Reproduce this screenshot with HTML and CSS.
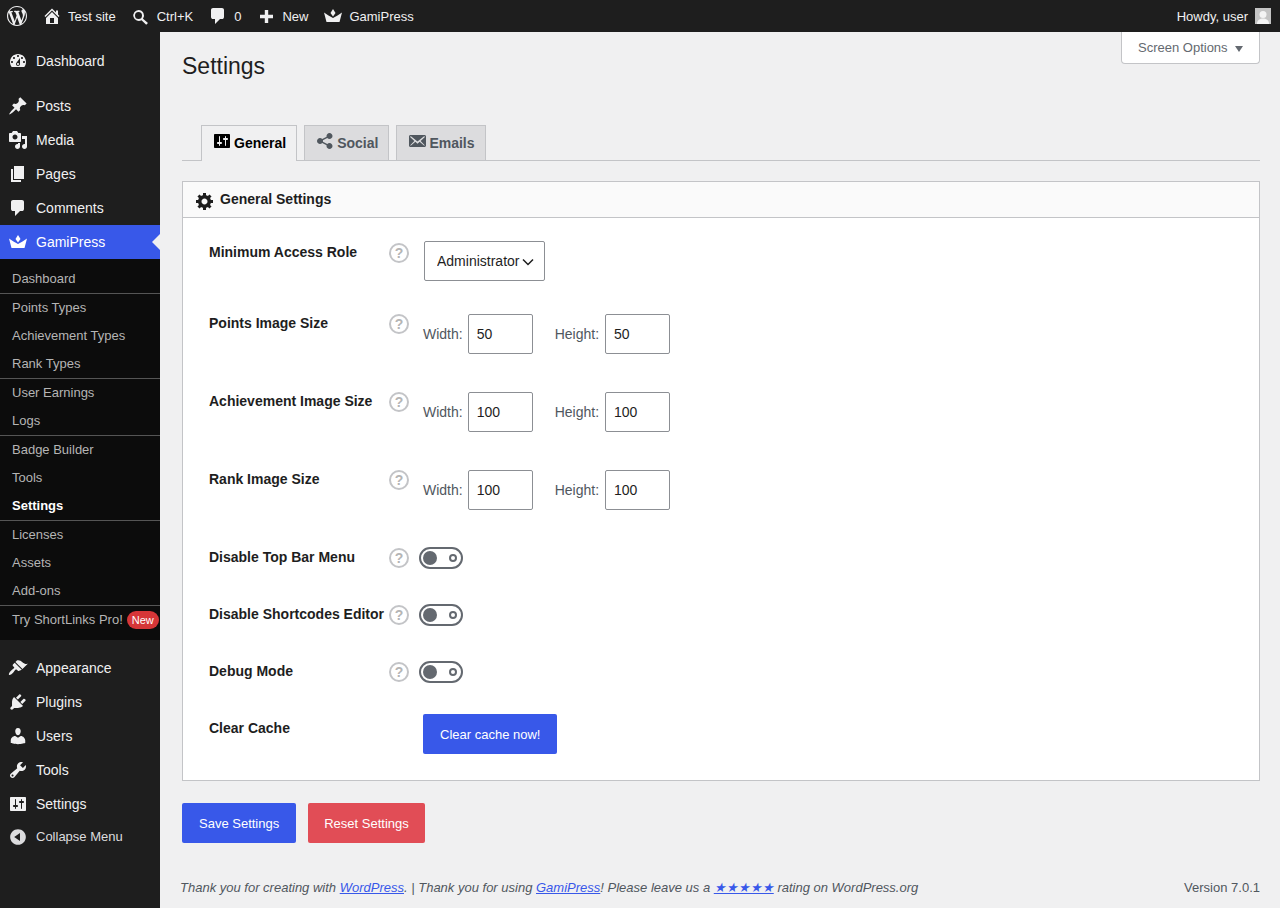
FILE: index.html
```html
<!DOCTYPE html>
<html>

<head>
    <title>Settings</title>
    <link rel="stylesheet" href="styles.css">
</head>

<body>
    <!-- Icon sprites -->
    <svg class="sprites" xmlns="http://www.w3.org/2000/svg">
        <symbol id="i-wp" viewBox="0 0 20 20"><path d="M20 10c0-5.51-4.49-10-10-10C4.48 0 0 4.49 0 10c0 5.52 4.48 10 10 10 5.51 0 10-4.48 10-10zM7.78 15.37L4.37 6.22c.55-.02 1.17-.08 1.17-.08.5-.06.44-1.13-.06-1.11 0 0-1.45.11-2.37.11-.18 0-.37 0-.58-.01C4.12 2.69 6.87 1.11 10 1.11c2.33 0 4.45.87 6.05 2.34-.68-.11-1.65.39-1.65 1.58 0 .74.45 1.36.9 2.1.35.61.55 1.36.55 2.46 0 1.49-1.4 5-1.4 5l-3.03-8.37c.54-.02.82-.17.82-.17.5-.05.44-1.25-.06-1.22 0 0-1.44.12-2.38.12-.87 0-2.33-.12-2.33-.12-.5-.03-.56 1.2-.06 1.22l.92.08 1.26 3.41zM17.41 10c.24-.64.74-1.87.43-4.25.7 1.29 1.05 2.71 1.05 4.25 0 3.29-1.73 6.24-4.4 7.78.97-2.59 1.94-5.2 2.92-7.78zM6.1 18.09C3.12 16.65 1.11 13.53 1.11 10c0-1.3.23-2.48.72-3.59C3.25 10.3 4.67 14.2 6.1 18.09zm4.03-6.63l2.58 6.98c-.86.29-1.76.45-2.71.45-.79 0-1.57-.11-2.29-.33.81-2.38 1.62-4.74 2.42-7.1z"/></symbol>
        <symbol id="i-home" viewBox="0 0 20 20"><path d="M16 8.5l1.53 1.53-1.06 1.06L10 4.62l-6.47 6.47-1.06-1.06L10 2.5l4 4v-2h2v4zm-6-2.46l6 5.99V18H4v-5.97zM12 17v-5H8v5h4z"/></symbol>
        <symbol id="i-search" viewBox="0 0 20 20"><path d="M7.500 4a5.500 5.500 0 0 1 4.500 8.700l5 4.300-1.800 1.800-4.700-4.500A5.500 5.500 0 1 1 7.500 4zm0 2a3.500 3.500 0 1 0 0 7 3.500 3.500 0 0 0 0-7z"/></symbol>
        <symbol id="i-comment" viewBox="0 0 20 20"><path d="M5 2h9q.82 0 1.41.59T16 4v7q0 .82-.59 1.41T14 13h-2l-5 5v-5H5q-.82 0-1.41-.59T3 11V4q0-.82.59-1.41T5 2z"/></symbol>
        <symbol id="i-plus" viewBox="0 0 20 20"><path d="M8.800 4h3.400v4.800H17v3.400h-4.800V17H8.800v-4.800H4V8.800h4.800z"/></symbol>
        <symbol id="i-crown" viewBox="0 0 20 20"><path d="M10 3l2.500 4L10 10.500 7.500 7zM1 6.500l4.500 3L10 12l4.500-2.500 4.500-3L16.500 16h-13z"/></symbol>
        <symbol id="i-dashboard" viewBox="0 0 20 20"><path d="M3.760 16h12.480c1.100-1.370 1.760-3.110 1.760-5 0-4.420-3.580-8-8-8s-8 3.580-8 8c0 1.890.66 3.630 1.760 5zM10 4c.55 0 1 .45 1 1s-.45 1-1 1-1-.45-1-1 .45-1 1-1zM6 6c.55 0 1 .45 1 1s-.45 1-1 1-1-.45-1-1 .45-1 1-1zm8 0c.55 0 1 .45 1 1s-.45 1-1 1-1-.45-1-1 .45-1 1-1zm-5.370 5.550L12 7v6c0 1.100-.9 2-2 2s-2-.9-2-2c0-.57.24-1.080.63-1.450zM4 10c.55 0 1 .45 1 1s-.45 1-1 1-1-.45-1-1 .45-1 1-1zm12 0c.55 0 1 .45 1 1s-.45 1-1 1-1-.45-1-1 .45-1 1-1zm-5 3c0-.55-.45-1-1-1s-1 .45-1 1 .45 1 1 1 1-.45 1-1z"/></symbol>
        <symbol id="i-pin" viewBox="0 0 20 20"><path d="M10.440 3.020l1.820-1.820 6.360 6.350-1.830 1.820c-1.050-.68-2.480-.57-3.410.36l-.75.75c-.92.93-1.040 2.350-.35 3.410l-1.830 1.820-2.410-2.410-2.800 2.790c-.42.42-3.380 2.710-3.800 2.290s1.860-3.390 2.280-3.810l2.790-2.790L4.100 9.360l1.830-1.820c1.050.69 2.480.57 3.400-.36l.75-.75c.93-.92 1.050-2.350.36-3.410z"/></symbol>
        <symbol id="i-media" viewBox="0 0 20 20"><path d="M13 11V4c0-.55-.45-1-1-1h-1.670L9 1H5L3.670 3H2c-.55 0-1 .45-1 1v7c0 .55.45 1 1 1h10c.55 0 1-.45 1-1zM7 4.500c1.380 0 2.500 1.120 2.500 2.500S8.380 9.500 7 9.500 4.500 8.380 4.500 7 5.620 4.500 7 4.500zM14 6h5v10.500c0 1.380-1.120 2.500-2.500 2.500S14 17.880 14 16.500s1.120-2.500 2.500-2.500c.17 0 .34.02.5.05V9h-3V6zm-4 8.050V13h2v3.500c0 1.380-1.120 2.500-2.500 2.500S7 17.880 7 16.500 8.120 14 9.500 14c.17 0 .34.02.5.05z"/></symbol>
        <symbol id="i-pages" viewBox="0 0 20 20"><path d="M6 15V2h10v13H6zm-1 1h8v2H3V5h2v11z"/></symbol>
        <symbol id="i-brush" viewBox="0 0 20 20"><path d="M14.480 11.060L7.410 3.990l1.500-1.500c.5-.56 2.300-.47 3.510.32 1.210.8 1.430 1.280 2.910 2.100 1.180.64 2.450 1.260 4.450.85zm-.71.71L6.700 4.700 4.930 6.470c-.39.39-.39 1.020 0 1.410l1.060 1.060c.39.39.39 1.030 0 1.420-.6.6-1.430 1.150-2.210 1.730-.35.26-.7.53-1.010.84-1.340 1.340-2.400 3.200-1.770 3.830.63.63 2.490-.43 3.830-1.770.31-.31.580-.66.840-1.010.58-.78 1.130-1.610 1.730-2.210.39-.39 1.030-.39 1.420 0l1.060 1.060c.39.39 1.020.39 1.410 0z"/></symbol>
        <symbol id="i-plugin" viewBox="0 0 20 20"><path d="M13.110 4.360L9.870 7.600 8 5.730l3.240-3.240c.35-.34 1.050-.2 1.560.32.52.51.66 1.210.31 1.550zm-8 1.770l.91-1.120 9.010 9.010-1.190.84c-.71.71-2.630 1.160-3.820 1.160H6.140L4.900 17.260c-.59.59-1.540.59-2.120 0-.59-.58-.59-1.530 0-2.120l1.240-1.240v-3.880c0-1.130.4-3.190 1.090-3.890zm7.260 3.970l3.240-3.240c.34-.35 1.040-.21 1.550.31.52.51.66 1.210.31 1.550l-3.240 3.250z"/></symbol>
        <symbol id="i-users" viewBox="0 0 20 20"><path d="M10 9.250c-2.270 0-2.730-3.440-2.730-3.440C7 4.020 7.820 2 9.970 2c2.160 0 2.980 2.020 2.710 3.810 0 0-.41 3.440-2.680 3.440zm0 2.570L12.720 10c2.390 0 4.520 2.330 4.520 4.530v2.490s-3.650 1.130-7.240 1.130c-3.650 0-7.240-1.130-7.240-1.130v-2.490c0-2.250 1.940-4.480 4.470-4.480z"/></symbol>
        <symbol id="i-tools" viewBox="0 0 20 20"><path d="M16.680 9.770c-1.340 1.340-3.300 1.670-4.950.99l-5.410 6.520c-.99.99-2.590.99-3.580 0s-.99-2.590 0-3.570l6.520-5.420c-.68-1.650-.35-3.610.99-4.950 1.280-1.280 3.120-1.620 4.720-1.060l-2.890 2.890 2.820 2.820 2.860-2.870c.53 1.580.18 3.390-1.080 4.650zM3.810 16.210c.4.39 1.040.39 1.430 0 .4-.4.4-1.040 0-1.430-.39-.4-1.030-.4-1.430 0-.39.39-.39 1.030 0 1.430z"/></symbol>
        <symbol id="i-settings" viewBox="0 0 20 20"><path d="M18 16V4c0-.55-.45-1-1-1H3c-.55 0-1 .45-1 1v12c0 .55.45 1 1 1h14c.55 0 1-.45 1-1zM8 11h1c.55 0 1 .45 1 1s-.45 1-1 1H8v1.500c0 .28-.22.5-.5.5s-.5-.22-.5-.5V13H6c-.55 0-1-.45-1-1s.45-1 1-1h1V5.500c0-.28.22-.5.5-.5s.5.22.5.5V11zm5-2h-1c-.55 0-1-.45-1-1s.45-1 1-1h1V5.500c0-.28.22-.5.5-.5s.5.22.5.5V7h1c.55 0 1 .45 1 1s-.45 1-1 1h-1v5.500c0 .28-.22.5-.5.5s-.5-.22-.5-.5V9z"/></symbol>
        <symbol id="i-collapse" viewBox="0 0 20 20"><path d="M10 2.160c4.330 0 7.840 3.510 7.840 7.840s-3.510 7.840-7.840 7.840S2.160 14.330 2.160 10 5.710 2.160 10 2.160zm2 11.720V6.120L6.180 9.970z"/></symbol>
        <symbol id="i-gear" viewBox="0 0 20 20"><path d="M18 12h-2.180c-.17.7-.44 1.350-.81 1.930l1.540 1.540-2.100 2.100-1.540-1.540c-.58.36-1.230.63-1.910.79V19H8v-2.180c-.68-.16-1.330-.43-1.910-.79l-1.540 1.540-2.120-2.120 1.540-1.540c-.36-.58-.63-1.230-.79-1.910H1V9.030h2.170c.16-.7.44-1.350.8-1.940L2.430 5.550l2.100-2.100 1.540 1.540c.58-.37 1.240-.64 1.930-.81V2h3v2.180c.68.16 1.330.43 1.910.79l1.540-1.540 2.120 2.120-1.540 1.540c.36.59.64 1.240.8 1.940H18V12zm-8.500 1.500c1.660 0 3-1.340 3-3s-1.340-3-3-3-3 1.340-3 3 1.340 3 3 3z"/></symbol>
        <symbol id="i-share" viewBox="0 0 20 20"><path d="M14.500 12q1.240 0 2.120.88T17.500 15t-.88 2.120-2.120.88-2.120-.88T11.500 15q0-.34.09-.69l-4.380-2.300Q6.320 13 5 13q-1.240 0-2.120-.88T2 10t.88-2.120T5 7q1.300 0 2.210.99l4.380-2.300q-.09-.35-.09-.69 0-1.240.88-2.120T14.500 2t2.120.88T17.500 5t-.88 2.120T14.500 8q-1.300 0-2.210-.99l-4.380 2.300Q8 9.660 8 10t-.09.69l4.380 2.300q.89-.99 2.210-.99z"/></symbol>
        <symbol id="i-email" viewBox="0 0 20 20"><path d="M19 14.500v-9c0-.83-.67-1.500-1.500-1.500H3.490c-.83 0-1.500.67-1.500 1.500v9c0 .83.67 1.500 1.500 1.500H17.500c.83 0 1.500-.67 1.500-1.500zm-1.310-9.110c.33.33.15.67-.03.84L13.600 9.950l3.900 4.060c.12.14.2.36.06.51-.13.16-.43.15-.56.05l-4.370-3.730-2.140 1.950-2.130-1.950-4.370 3.730c-.13.1-.43.11-.56-.05-.14-.15-.06-.37.06-.51l3.900-4.060-4.060-3.720c-.18-.17-.36-.51-.03-.84s.67-.17.95.07l6.240 5.040 6.250-5.040c.28-.24.62-.4.95-.07z"/></symbol>
    </svg>

    <div class="adminbar">
        <a class="bar-item"><svg class="icon"><use href="#i-wp"/></svg></a>
        <a class="bar-item"><svg class="icon"><use href="#i-home"/></svg>Test site</a>
        <a class="bar-item"><svg class="icon"><use href="#i-search"/></svg>Ctrl+K</a>
        <a class="bar-item"><svg class="icon"><use href="#i-comment"/></svg>0</a>
        <a class="bar-item"><svg class="icon"><use href="#i-plus"/></svg>New</a>
        <a class="bar-item"><svg class="icon"><use href="#i-crown"/></svg>GamiPress</a>
        <div class="howdy">Howdy, user <span class="avatar"><svg viewBox="0 0 16 16"><circle cx="8" cy="6.500" r="3.500"/><path d="M2 16c0-4 3-5.500 6-5.500s6 1.500 6 5.500z"/></svg></span></div>
    </div>

    <div class="layout">
        <div class="sidebar">
            <a class="menu-item"><svg class="icon"><use href="#i-dashboard"/></svg>Dashboard</a>
            <div class="menu-sep"></div>
            <a class="menu-item"><svg class="icon"><use href="#i-pin"/></svg>Posts</a>
            <a class="menu-item"><svg class="icon"><use href="#i-media"/></svg>Media</a>
            <a class="menu-item"><svg class="icon"><use href="#i-pages"/></svg>Pages</a>
            <a class="menu-item"><svg class="icon"><use href="#i-comment"/></svg>Comments</a>
            <a class="menu-item active"><svg class="icon"><use href="#i-crown"/></svg>GamiPress</a>

            <div class="submenu">
                <div class="sub-group">
                    <a class="sub-item">Dashboard</a>
                </div>
                <div class="sub-group">
                    <a class="sub-item">Points Types</a>
                    <a class="sub-item">Achievement Types</a>
                    <a class="sub-item">Rank Types</a>
                </div>
                <div class="sub-group">
                    <a class="sub-item">User Earnings</a>
                    <a class="sub-item">Logs</a>
                </div>
                <div class="sub-group">
                    <a class="sub-item">Badge Builder</a>
                    <a class="sub-item">Tools</a>
                    <a class="sub-item current">Settings</a>
                </div>
                <div class="sub-group">
                    <a class="sub-item">Licenses</a>
                    <a class="sub-item">Assets</a>
                    <a class="sub-item">Add-ons</a>
                </div>
                <div class="sub-group">
                    <a class="sub-item">Try ShortLinks Pro!<span class="new-badge">New</span></a>
                </div>
            </div>

            <div class="menu-sep"></div>
            <a class="menu-item"><svg class="icon"><use href="#i-brush"/></svg>Appearance</a>
            <a class="menu-item"><svg class="icon"><use href="#i-plugin"/></svg>Plugins</a>
            <a class="menu-item"><svg class="icon"><use href="#i-users"/></svg>Users</a>
            <a class="menu-item"><svg class="icon"><use href="#i-tools"/></svg>Tools</a>
            <a class="menu-item"><svg class="icon"><use href="#i-settings"/></svg>Settings</a>
            <a class="menu-item collapse"><svg class="icon"><use href="#i-collapse"/></svg>Collapse Menu</a>
        </div>

        <div class="content">
            <button class="screen-options">Screen Options<span class="arrow-down"></span></button>
            <h1 class="page-title">Settings</h1>

            <div class="tabs">
                <a class="tab active"><svg class="icon"><use href="#i-settings"/></svg>General</a>
                <a class="tab"><svg class="icon"><use href="#i-share"/></svg>Social</a>
                <a class="tab"><svg class="icon"><use href="#i-email"/></svg>Emails</a>
            </div>

            <div class="card">
                <div class="card-header"><svg class="icon"><use href="#i-gear"/></svg>General Settings</div>
                <div class="card-body">
                    <div class="form-row row-select">
                        <div class="row-label">Minimum Access Role</div>
                        <span class="help">?</span>
                        <div class="row-field">
                            <select class="role-select"><option>Administrator</option></select>
                        </div>
                    </div>

                    <div class="form-row row-size">
                        <div class="row-label">Points Image Size</div>
                        <span class="help">?</span>
                        <div class="row-field">
                            <label>Width:</label><input type="text" value="50">
                            <label class="second">Height:</label><input type="text" value="50">
                        </div>
                    </div>

                    <div class="form-row row-size">
                        <div class="row-label">Achievement Image Size</div>
                        <span class="help">?</span>
                        <div class="row-field">
                            <label>Width:</label><input type="text" value="100">
                            <label class="second">Height:</label><input type="text" value="100">
                        </div>
                    </div>

                    <div class="form-row row-size">
                        <div class="row-label">Rank Image Size</div>
                        <span class="help">?</span>
                        <div class="row-field">
                            <label>Width:</label><input type="text" value="100">
                            <label class="second">Height:</label><input type="text" value="100">
                        </div>
                    </div>

                    <div class="form-row row-toggle">
                        <div class="row-label">Disable Top Bar Menu</div>
                        <span class="help">?</span>
                        <div class="row-field"><span class="toggle"></span></div>
                    </div>

                    <div class="form-row row-toggle">
                        <div class="row-label">Disable Shortcodes Editor</div>
                        <span class="help">?</span>
                        <div class="row-field"><span class="toggle"></span></div>
                    </div>

                    <div class="form-row row-toggle">
                        <div class="row-label">Debug Mode</div>
                        <span class="help">?</span>
                        <div class="row-field"><span class="toggle"></span></div>
                    </div>

                    <div class="form-row row-button">
                        <div class="row-label">Clear Cache</div>
                        <span></span>
                        <div class="row-field"><button class="btn btn-blue">Clear cache now!</button></div>
                    </div>
                </div>
            </div>

            <div class="actions">
                <button class="btn btn-blue">Save Settings</button>
                <button class="btn btn-red">Reset Settings</button>
            </div>

            <div class="footer">
                <div class="thanks">Thank you for creating with <a>WordPress</a>. | Thank you for using <a>GamiPress</a>! Please leave us a <a>★★★★★</a> rating on WordPress.org</div>
                <div class="version">Version 7.0.1</div>
            </div>
        </div>
    </div>
</body>

</html>
```

FILE: styles.css
```css
body {
    margin: 0;
    height: 908px;
    overflow: hidden;
    background: #f0f0f1;
    color: #1e1e1e;
    font-family: 'Liberation Sans', Arial, sans-serif;
    font-size: 13px;
}

.sprites {
    display: none;
}

.icon {
    width: 20px;
    height: 20px;
    fill: currentColor;
    flex-shrink: 0;
}

/* Top bar */
.adminbar {
    display: flex;
    align-items: center;
    gap: 15px;
    height: 32px;
    padding: 0 9px 0 7px;
    background: #1e1e1e;
    color: #f0f0f1;
}

.bar-item {
    display: flex;
    align-items: center;
    gap: 6px;
}

.howdy {
    display: flex;
    align-items: center;
    gap: 7px;
    margin-left: auto;
}

.avatar {
    width: 16px;
    height: 16px;
    background: #c4c4c4;
}

.avatar svg {
    display: block;
    fill: #f4f4f4;
}

/* Side menu */
.layout {
    display: flex;
    height: 876px;
}

.sidebar {
    width: 160px;
    flex-shrink: 0;
    padding-top: 12px;
    box-sizing: border-box;
    background: #1e1e1e;
    color: #f0f0f1;
}

.menu-sep {
    height: 11px;
}

.menu-item {
    display: flex;
    align-items: center;
    gap: 8px;
    position: relative;
    height: 34px;
    padding-left: 8px;
    font-size: 14px;
}

.menu-item.active {
    background: #3858e9;
    color: #fff;
}

.menu-item.active::after {
    content: "";
    position: absolute;
    right: 0;
    top: 9px;
    border: 8px solid transparent;
    border-left: none;
    border-right-color: #f0f0f1;
}

.menu-item.collapse {
    height: 32px;
    padding-bottom: 2px;
    box-sizing: border-box;
    font-size: 13px;
    color: #dcdcde;
}

.menu-item.collapse .icon {
    margin-top: 2px;
}

.submenu {
    padding: 6px 0;
    background: #0c0c0c;
    color: #b5b5b5;
}

.sub-group + .sub-group {
    border-top: 1px solid #555;
}

.sub-item {
    display: flex;
    align-items: center;
    height: 28px;
    padding: 0 0 2px 12px;
    box-sizing: border-box;
}

.sub-item.current {
    color: #fff;
    font-weight: bold;
}

.new-badge {
    height: 18px;
    margin: 2px 0 0 4px;
    padding: 0 5px;
    border-radius: 9px;
    background: #d63638;
    color: #fff;
    font-size: 11px;
    line-height: 18px;
}

/* Main area */
.content {
    flex-grow: 1;
    padding: 0 20px 0 22px;
}

.screen-options {
    float: right;
    display: flex;
    align-items: center;
    width: 139px;
    height: 32px;
    padding: 0 0 0 16px;
    border: 1px solid #c3c4c7;
    border-top: none;
    border-radius: 0 0 4px 4px;
    background: #fff;
    color: #646970;
    font-family: inherit;
    font-size: 13px;
}

.arrow-down {
    margin: 2px 0 0 7px;
    border: 4px solid transparent;
    border-bottom: none;
    border-top: 6px solid #646970;
}

.page-title {
    margin: 0;
    padding-top: 19px;
    font-size: 23px;
    font-weight: 400;
    line-height: 30px;
}

.tabs {
    display: flex;
    gap: 7px;
    margin-top: 44px;
    padding-left: 19px;
    border-bottom: 1px solid #c3c4c7;
}

.tab {
    display: flex;
    align-items: center;
    gap: 2px;
    height: 34px;
    margin-bottom: -1px;
    padding: 0 10px;
    border: 1px solid #c3c4c7;
    border-bottom: none;
    background: #dcdcde;
    color: #50575e;
    font-size: 14px;
    font-weight: bold;
}

.tab .icon {
    margin-bottom: 4px;
}

.tab.active {
    padding-bottom: 1px;
    background: #f0f0f1;
    color: #000;
}

.card {
    margin-top: 20px;
    border: 1px solid #c3c4c7;
    background: #fff;
}

.card-header {
    display: flex;
    align-items: center;
    gap: 5px;
    height: 33px;
    padding: 0 0 2px 12px;
    border-bottom: 1px solid #c3c4c7;
    background: #fafafa;
    font-size: 14px;
    font-weight: bold;
}

.card-header .icon {
    margin-top: 5px;
}

.card-body {
    padding: 24px 0 26px 26px;
}

.form-row {
    display: grid;
    grid-template-columns: 180px 20px 1fr;
    align-items: start;
}

.row-select {
    padding-bottom: 32px;
}

.row-size {
    padding-bottom: 37px;
}

.row-toggle {
    padding-bottom: 35px;
}

.row-label {
    color: #1e1e1e;
    font-size: 14px;
    font-weight: bold;
    line-height: 20px;
}

.help {
    width: 20px;
    height: 20px;
    margin-top: 1px;
    box-sizing: border-box;
    border: 2px solid #c3c4c7;
    border-radius: 50%;
    color: #b5b5b5;
    font-size: 14px;
    font-weight: bold;
    line-height: 16px;
    text-align: center;
}

.row-field {
    display: flex;
    align-items: center;
    margin-left: 14px;
    color: #50575e;
    font-size: 14px;
}

.row-select .row-field {
    margin-top: -1px;
    margin-left: 15px;
}

.row-size .row-field {
    margin-top: 1px;
}

.row-toggle .row-field {
    margin-left: 10px;
}

.row-button .row-field {
    margin-top: -4px;
}

.role-select {
    appearance: none;
    width: 121px;
    height: 40px;
    padding: 0 0 0 12px;
    border: 1px solid #8c8f94;
    border-radius: 2px;
    background: #fff url("data:image/svg+xml,%3Csvg xmlns='http://www.w3.org/2000/svg' viewBox='0 0 12 8'%3E%3Cpath d='M1 1.500l5 5 5-5' fill='none' stroke='%231e1e1e' stroke-width='1.500'/%3E%3C/svg%3E") no-repeat 97px 16px / 12px 8px;
    color: #1e1e1e;
    font-family: inherit;
    font-size: 14px;
}

.row-field input {
    width: 65px;
    height: 40px;
    margin-left: 5px;
    padding: 0 8px;
    box-sizing: border-box;
    border: 1px solid #8c8f94;
    border-radius: 2px;
    color: #1e1e1e;
    font-family: inherit;
    font-size: 14px;
}

.row-field .second {
    margin-left: 22px;
}

.row-field .second + input {
    margin-left: 6px;
}

.toggle {
    position: relative;
    width: 44px;
    height: 22px;
    box-sizing: border-box;
    border: 2px solid #646970;
    border-radius: 11px;
}

.toggle::before {
    content: "";
    position: absolute;
    left: 2px;
    top: 2px;
    width: 14px;
    height: 14px;
    border-radius: 50%;
    background: #646970;
}

.toggle::after {
    content: "";
    position: absolute;
    right: 4px;
    top: 5px;
    width: 8px;
    height: 8px;
    box-sizing: border-box;
    border: 2px solid #646970;
    border-radius: 50%;
}

.btn {
    height: 40px;
    padding: 0 17px;
    border: none;
    border-radius: 2px;
    color: #fff;
    font-family: inherit;
    font-size: 13px;
}

.btn-blue {
    background: #3858e9;
}

.btn-red {
    padding: 0 16px;
    background: #e14d56;
}

.actions {
    display: flex;
    gap: 12px;
    margin-top: 22px;
}

.footer {
    display: flex;
    justify-content: space-between;
    margin: 37px 0 0 -2px;
    color: #50575e;
    line-height: 16px;
}

.thanks {
    font-style: italic;
}

.thanks a {
    color: #3858e9;
    text-decoration: underline;
}
```
